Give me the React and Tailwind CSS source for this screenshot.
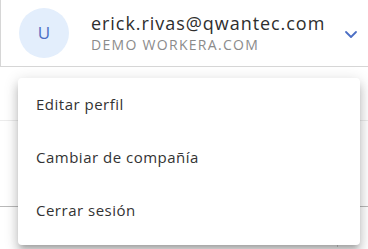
import React from "react";

export default function App() {
  const font = { fontFamily: '"Open Sans", "Noto Sans", sans-serif' };
  return (
    <div className="relative w-[368px] h-[249px] bg-white overflow-hidden" style={font}>
      <div className="flex items-center h-[67px] border-l border-b border-[#d6d6d6] pl-[18px] pr-[10px]">
        <div className="w-[50px] h-[50px] rounded-full bg-[#e3eefc] flex items-center justify-center text-[#4c6fc4] text-[17px]">
          U
        </div>
        <div className="flex flex-col ml-[22px] flex-1">
          <div className="text-[18px] leading-[22px] text-[#2e2e2e] tracking-[0.95px]">erick.rivas@qwantec.com</div>
          <div className="text-[14px] leading-[18px] text-[#8b8b8b] mt-[2px] tracking-[1.3px]">DEMO WORKERA.COM</div>
        </div>
        <svg width="14" height="10" viewBox="0 0 14 10" className="mt-[2px]">
          <path d="M2 3 L7 8 L12 3" fill="none" stroke="#4c6fc4" strokeWidth="1.8" strokeLinecap="round" strokeLinejoin="round" />
        </svg>
      </div>
      <div className="h-[54px] border-b border-[#ececec]" />
      <div className="h-[86px] border-b border-[#b9b9b9]" />
      <div className="flex justify-end pr-[30px]">
        <div className="w-px h-[40px] bg-[#cfcfcf]" />
      </div>
      <div className="absolute left-[18px] top-[78px] w-[342px] h-[167px] bg-white rounded-[4px] shadow-[0_5px_5px_-3px_rgba(0,0,0,0.2),0_8px_10px_1px_rgba(0,0,0,0.14),0_3px_14px_2px_rgba(0,0,0,0.12)] flex flex-col">
        <div className="h-[53px] flex items-center pl-[18px] text-[15px] tracking-[0.5px] text-[#333333]">Editar perfil</div>
        <div className="h-[53px] flex items-center pl-[18px] text-[15px] tracking-[0.5px] text-[#333333]">Cambiar de compañía</div>
        <div className="h-[53px] flex items-center pl-[18px] text-[15px] tracking-[0.5px] text-[#333333]">Cerrar sesión</div>
      </div>
    </div>
  );
}
